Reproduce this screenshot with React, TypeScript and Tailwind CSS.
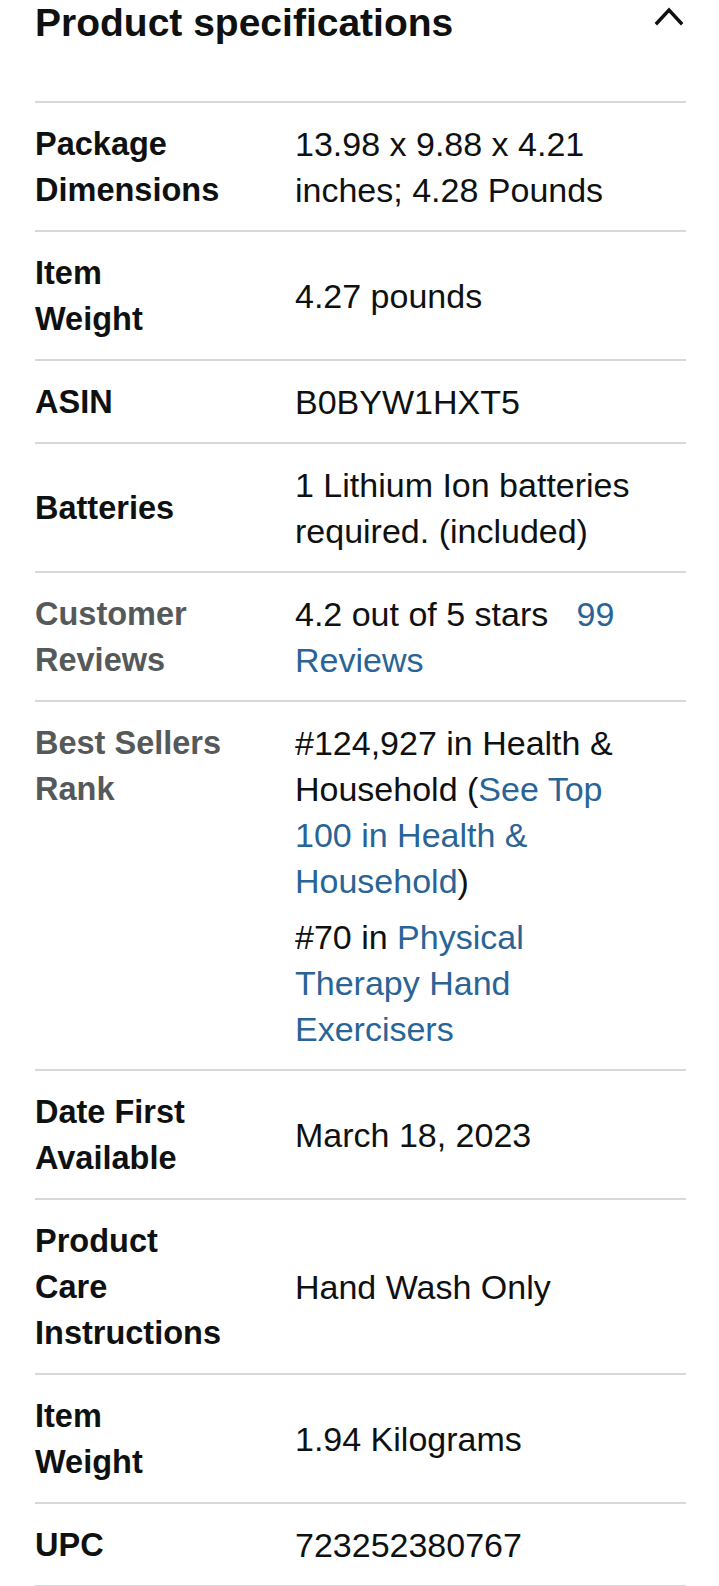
import React from 'react';

type Part = { text: string; link?: boolean };
type Spec = { label: string[]; muted?: boolean; top?: boolean; values: Part[][][] };

// every value is a list of blocks; every block a list of lines; every line a list of parts
const specs: Spec[] = [
  {
    label: ['Package', 'Dimensions'],
    values: [[[{ text: '13.98 x 9.88 x 4.21' }], [{ text: 'inches; 4.28 Pounds' }]]],
  },
  { label: ['Item', 'Weight'], values: [[[{ text: '4.27 pounds' }]]] },
  { label: ['ASIN'], values: [[[{ text: 'B0BYW1HXT5' }]]] },
  {
    label: ['Batteries'],
    values: [[[{ text: '1 Lithium Ion batteries' }], [{ text: 'required. (included)' }]]],
  },
  {
    label: ['Customer', 'Reviews'],
    muted: true,
    values: [[[{ text: '4.2 out of 5 stars\u00a0\u00a0 ' }, { text: '99', link: true }], [{ text: 'Reviews', link: true }]]],
  },
  {
    label: ['Best Sellers', 'Rank'],
    muted: true,
    top: true,
    values: [
      [
        [{ text: '#124,927 in Health &' }],
        [{ text: 'Household (' }, { text: 'See Top', link: true }],
        [{ text: '100 in Health &', link: true }],
        [{ text: 'Household', link: true }, { text: ')' }],
      ],
      [
        [{ text: '#70 in ' }, { text: 'Physical', link: true }],
        [{ text: 'Therapy Hand', link: true }],
        [{ text: 'Exercisers', link: true }],
      ],
    ],
  },
  { label: ['Date First', 'Available'], values: [[[{ text: 'March 18, 2023' }]]] },
  { label: ['Product', 'Care', 'Instructions'], values: [[[{ text: 'Hand Wash Only' }]]] },
  { label: ['Item', 'Weight'], values: [[[{ text: '1.94 Kilograms' }]]] },
  { label: ['UPC'], values: [[[{ text: '723252380767' }]]] },
];

export default function App() {
  return (
    <div className="min-h-screen bg-white pl-[35px] pr-[33px] font-['Liberation_Sans',Arial,sans-serif] text-[#0f1111]">
      {/* header */}
      <div className="flex h-[101px] items-start justify-between">
        <h2 className="pt-[1px] text-[39px] font-bold leading-[44px]">Product specifications</h2>
        <svg className="mt-[5px] h-[22px] w-[34px]" viewBox="0 0 34 22" fill="none" stroke="#0f1111" strokeWidth={3.4}>
          <path d="M5 18 L17 5 L29 18" strokeLinecap="square" />
        </svg>
      </div>

      {/* table */}
      <div className="border-t-2 border-[#d5d9d9]">
        {specs.map((s, i) => (
          <div key={i} className="flex border-b-2 border-[#d5d9d9] py-[17.5px]">
            <div
              className={
                'w-[260px] shrink-0 text-[32.5px] font-bold leading-[46px] ' +
                (s.top ? 'self-start ' : 'self-center ') +
                (s.muted ? 'text-[#565959]' : 'text-[#0f1111]')
              }
            >
              {s.label.map((l, j) => (
                <div key={j} className="whitespace-nowrap">
                  {l}
                </div>
              ))}
            </div>
            <div className="flex flex-1 flex-col justify-center gap-[10px] text-[34px] leading-[46px]">
              {s.values.map((block, j) => (
                <div key={j}>
                  {block.map((line, k) => (
                    <div key={k} className="whitespace-pre">
                      {line.map((p, m) =>
                        p.link ? (
                          <span key={m} className="text-[#2a6496]">
                            {p.text}
                          </span>
                        ) : (
                          <span key={m}>{p.text}</span>
                        )
                      )}
                    </div>
                  ))}
                </div>
              ))}
            </div>
          </div>
        ))}
      </div>
    </div>
  );
}
